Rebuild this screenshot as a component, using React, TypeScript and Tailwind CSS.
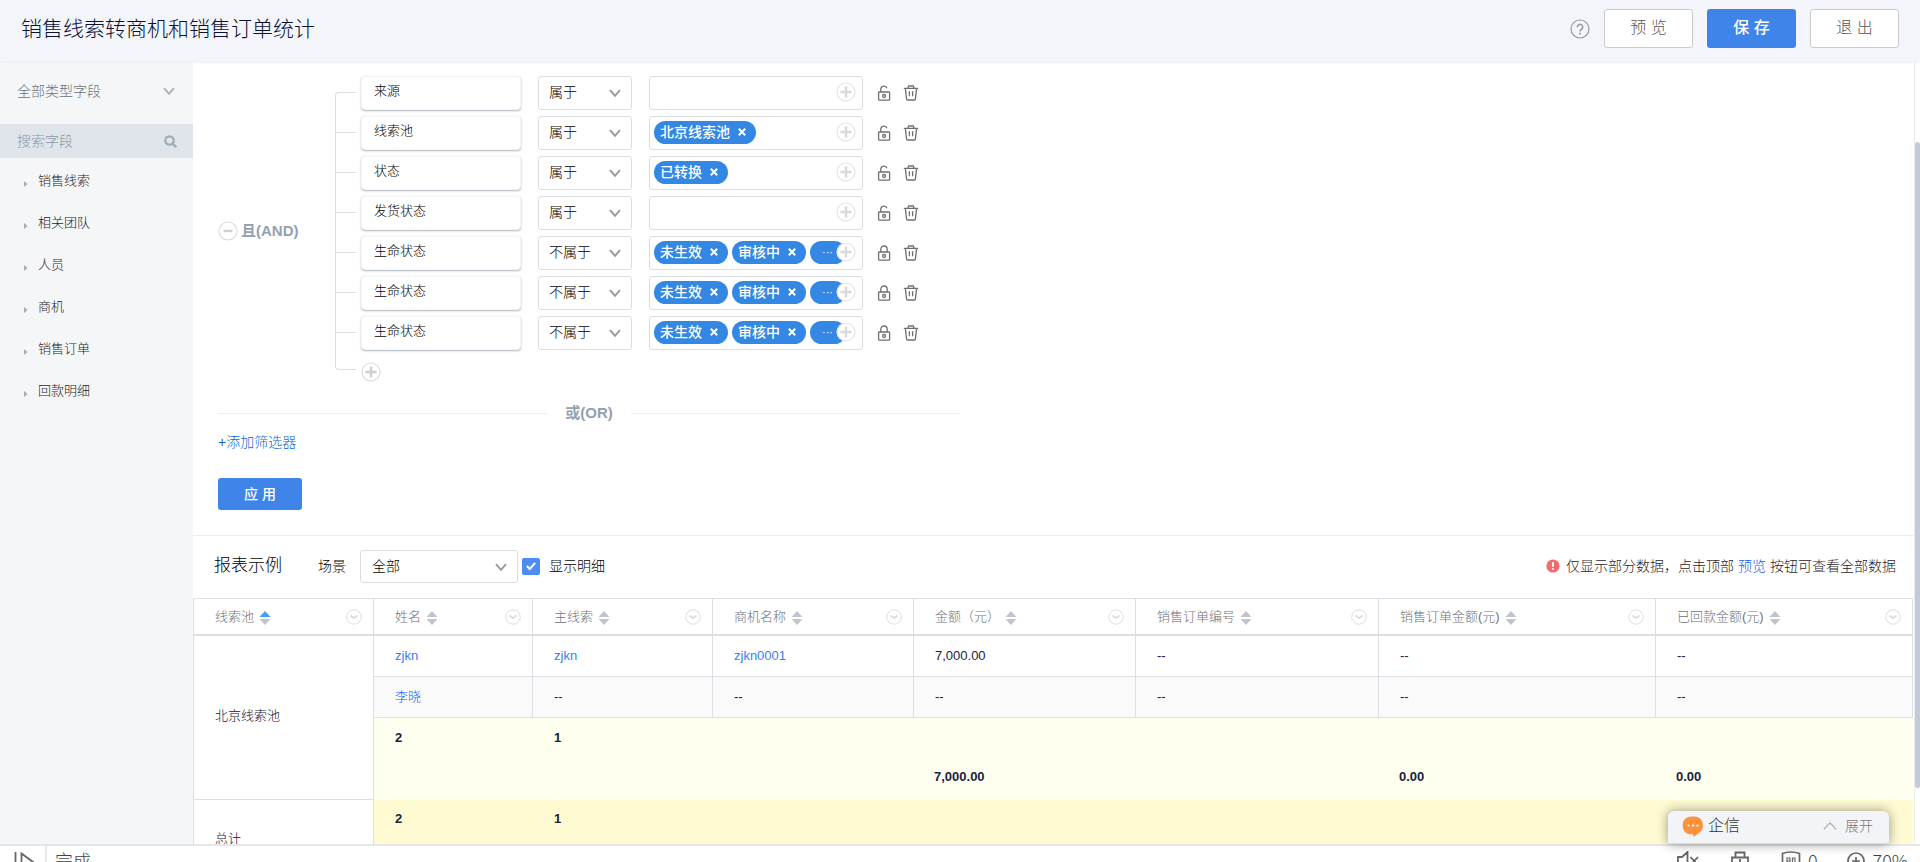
import React from "react";

type FilterRow = {
  field: string;
  operator: string;
  values: string[];
  more?: boolean;
  locked?: boolean;
};

const treeItems = ["销售线索", "相关团队", "人员", "商机", "销售订单", "回款明细"];

const filters: FilterRow[] = [
  { field: "来源", operator: "属于", values: [] },
  { field: "线索池", operator: "属于", values: ["北京线索池"] },
  { field: "状态", operator: "属于", values: ["已转换"] },
  { field: "发货状态", operator: "属于", values: [] },
  { field: "生命状态", operator: "不属于", values: ["未生效", "审核中"], more: true, locked: true },
  { field: "生命状态", operator: "不属于", values: ["未生效", "审核中"], more: true, locked: true },
  { field: "生命状态", operator: "不属于", values: ["未生效", "审核中"], more: true, locked: true },
];

const columns = [
  { title: "线索池", width: "w-[180px]", sorted: true },
  { title: "姓名", width: "w-[159px]" },
  { title: "主线索", width: "w-[180px]" },
  { title: "商机名称", width: "w-[201px]" },
  { title: "金额（元）", width: "w-[222px]" },
  { title: "销售订单编号", width: "w-[243px]" },
  { title: "销售订单金额(元)", width: "w-[277px]" },
  { title: "已回款金额(元)", width: "w-auto" },
];

const Chevron = ({ className = "" }: { className?: string }) => (
  <svg
    viewBox="0 0 12 10"
    className={`w-3 h-2.5 pointer-events-none ${className}`}
    fill="none"
    stroke="currentColor"
    strokeWidth="2"
  >
    <path d="M1 2.200 6 7.800l5-5.600" />
  </svg>
);

const CirclePlus = ({ minus = false, light = false }: { minus?: boolean; light?: boolean }) => (
  <svg viewBox="0 0 20 20" className="w-5 h-5" fill="none">
    <circle cx="10" cy="10" r="9" fill="#fff" stroke={light ? "#e4e4e4" : "#dcdcdc"} strokeWidth="1.200" />
    <path
      d={minus ? "M5.500 10h9" : "M10 4.500v11M4.500 10h11"}
      stroke={light ? "#d9d9d9" : "#d0d0d0"}
      strokeWidth="2.400"
    />
  </svg>
);

const LockIcon = ({ locked }: { locked?: boolean }) => (
  <svg viewBox="0 0 14 16" className="w-3.5 h-4" fill="none" stroke="#707070" strokeWidth="1.300">
    <rect x="1.600" y="7" width="11" height="8.200" rx=".8" />
    <path d={locked ? "M3.800 7V4.200a3.200 3.200 0 0 1 6.400 0V7" : "M3.800 7V4.200a3.200 3.200 0 0 1 6.200-1"} />
    <circle cx="7.100" cy="11" r="1.500" />
  </svg>
);

const TrashIcon = () => (
  <svg viewBox="0 0 16 16" className="w-4 h-4" fill="none" stroke="#707070" strokeWidth="1.300">
    <path d="M.8 3.400h14.400M5 3.200L5.600 1h4.800l.6 2.200M2.400 3.600l1.200 10.600q.1.800.9.800h7q.8 0 .9-.8l1.200-10.600M6.400 6.200v5M9.600 6.200v5" />
  </svg>
);

const SortIcon = ({ active }: { active?: boolean }) => (
  <svg viewBox="0 0 12 14" className="w-3 h-3.5">
    <path d="M6 0l5.500 6H.5z" fill={active ? "#409eff" : "#c0c4cc"} />
    <path d="M6 14l5.500-6H.5z" fill="#c0c4cc" />
  </svg>
);

const MenuIcon = () => (
  <svg viewBox="0 0 16 16" className="w-4 h-4" fill="none">
    <circle cx="8" cy="8" r="7.200" stroke="#dedede" />
    <path d="M4.500 6.500 8 9.200l3.500-2.700" stroke="#dcdcdc" strokeWidth="1.800" />
  </svg>
);

const Pill = ({ label }: { label: string }) => (
  <span className="flex items-center gap-2 h-[23px] pl-1.5 pr-2.5 rounded-full bg-[#3487e2] text-white text-sm font-medium whitespace-nowrap">
    {label}
    <button aria-label={`移除${label}`}>
      <svg viewBox="0 0 8 8" className="w-2 h-2" stroke="#fff" strokeWidth="2">
        <path d="M.8.8l6.400 6.400M7.200.8.8 7.200" />
      </svg>
    </button>
  </span>
);

const Filter = ({ row }: { row: FilterRow }) => (
  <div className="flex items-center h-[34px]">
    <div className="w-40 h-[34px] pl-3 rounded bg-white border border-[#f3f4f5] text-[13px] leading-7 text-black shadow-[0_1px_2px_#aeb6be]">
      {row.field}
    </div>
    <div className="relative ml-[17px]">
      <select
        aria-label={`${row.field}条件`}
        className="appearance-none w-[94px] h-[34px] pl-2.5 pb-0.5 rounded-[3px] border border-[#dcdde0] bg-white text-sm text-black"
      >
        <option>{row.operator}</option>
      </select>
      <Chevron className="absolute right-[11px] top-3 text-[#999]" />
    </div>
    <div className="relative ml-[17px] w-[214px] h-[34px] px-1 pb-0.5 flex items-center gap-1 rounded-[3px] border border-[#dcdde0] bg-white">
      {row.values.map((value) => (
        <Pill key={value} label={value} />
      ))}
      {row.more && (
        <span className="flex items-center h-[23px] w-9 pl-3 rounded-full bg-[#3487e2] text-white text-[11px]">
          ···
        </span>
      )}
      <button aria-label="添加值" className="absolute right-1.5 top-[5px]">
        <CirclePlus light />
      </button>
    </div>
    <button aria-label="锁定" className="ml-3.5">
      <LockIcon locked={row.locked} />
    </button>
    <button aria-label="删除" className="ml-3">
      <TrashIcon />
    </button>
  </div>
);

const Header = () => (
  <header className="relative z-10 flex items-center justify-between h-[61px] shrink-0 px-[21px] pb-1 bg-[#f4f5fa] shadow-[0_1px_3px_#e9ebf0]">
    <h1 className="text-[21px] leading-8 text-[#0a1033]">销售线索转商机和销售订单统计</h1>
    <div className="flex items-center gap-3.5 text-base">
      <a href="#help" aria-label="帮助">
        <svg viewBox="0 0 20 20" className="w-5 h-5" fill="none" stroke="#999">
          <circle cx="10" cy="10" r="9" strokeWidth="1.200" />
          <path d="M7.300 8.200a2.700 2.700 0 1 1 4.400 2c-1 .8-1.700 1.200-1.700 2.400" strokeWidth="1.600" />
          <path d="M10 13.800v1.700" strokeWidth="1.700" />
        </svg>
      </a>
      <button className="w-[89px] h-[39px] pb-0.5 rounded-[3px] border border-[#c9cbcd] bg-white text-[#555]">预 览</button>
      <button className="w-[89px] h-[39px] pb-0.5 rounded-[3px] bg-[#3f85e9] text-white font-medium">保 存</button>
      <button className="w-[89px] h-[39px] pb-0.5 rounded-[3px] border border-[#c9cbcd] bg-white text-[#555]">退 出</button>
    </div>
  </header>
);

const Sidebar = () => (
  <aside className="w-[193px] shrink-0 bg-[#f5f6f8]">
    <div className="relative">
      <select
        aria-label="字段类型"
        className="appearance-none block w-full h-[63px] pl-[17px] pb-1 text-sm text-[#6c727c] bg-transparent"
      >
        <option>全部类型字段</option>
      </select>
      <Chevron className="absolute right-[18px] top-[25px] text-[#a9b3be]" />
    </div>
    <div className="flex items-center h-[34px] pl-[17px] pr-4 bg-[#e0e5ec]">
      <input
        aria-label="搜索字段"
        placeholder="搜索字段"
        className="flex-1 min-w-0 bg-transparent text-sm placeholder:text-[#8b98a7] outline-none"
      />
      <svg viewBox="0 0 13 13" className="w-[13px] h-[13px]" fill="none" stroke="#9fabb8" strokeWidth="2.200">
        <circle cx="5.500" cy="5.500" r="4.200" />
        <path d="M8.600 8.600 12.300 12.300" />
      </svg>
    </div>
    <ul className="pt-0.5 text-[13px] text-[#1f242d]">
      {treeItems.map((item) => (
        <li key={item} className="flex items-center h-[42px] pl-6 gap-2.5">
          <svg viewBox="0 0 4 6" className="w-1 h-1.5 mt-1.5" fill="#a3afbb">
            <path d="M0 0l3.600 3-3.600 3z" />
          </svg>
          {item}
        </li>
      ))}
    </ul>
  </aside>
);

const FilterPanel = () => (
  <section className="px-[25px] pt-[15px] pb-[25px] border-b border-[#ececee]">
    {/* Condition group */}
    <div className="flex">
      <div className="flex items-center gap-[3px] w-[117px] pt-1 text-[15px] font-bold text-[#93a0af]">
        <button aria-label="折叠条件组">
          <CirclePlus minus />
        </button>
        且(AND)
      </div>
      <div className="w-[21px] mt-4 mr-[5px]">
        {filters.map((_, i) => (
          <div
            key={i}
            className="h-10 border-l border-t border-[#dcdde0] first:rounded-tl last:h-[38px] last:rounded-bl last:border-b"
          />
        ))}
      </div>
      <div>
        <div className="flex flex-col gap-1.5">
          {filters.map((row, i) => (
            <Filter key={i} row={row} />
          ))}
        </div>
        <button aria-label="添加条件" className="block mt-3">
          <CirclePlus />
        </button>
      </div>
    </div>

    {/* Group separator */}
    <div className="flex items-center max-w-[742px] mt-5 text-[15px] leading-[22px] font-bold text-[#93a0af]">
      <span className="flex-1 h-px bg-[#ebecee]" />
      <span className="px-[18px]">或(OR)</span>
      <span className="flex-1 h-px bg-[#ebecee]" />
    </div>

    <a href="#add" className="block mt-2 text-sm leading-5 text-[#0c68d0]">
      +添加筛选器
    </a>
    <button className="block mt-[26px] w-[84px] h-8 rounded-[3px] bg-[#3f85e9] text-white text-sm font-medium">
      应 用
    </button>
  </section>
);

const ReportBar = () => (
  <div className="flex items-center h-[62px] pb-0.5 pl-[21px] pr-[18px] text-sm text-black">
    <h2 className="text-[17px]">报表示例</h2>
    <label htmlFor="scene" className="ml-9">
      场景
    </label>
    <div className="relative ml-3.5">
      <select
        id="scene"
        className="appearance-none block w-[158px] h-[33px] pl-[11px] rounded-[3px] border border-[#dcdde0] bg-white text-sm"
      >
        <option>全部</option>
      </select>
      <Chevron className="absolute right-[11px] top-3 text-[#999]" />
    </div>
    <label className="relative flex items-center ml-1">
      <input type="checkbox" defaultChecked className="appearance-none w-[18px] h-[17px] mr-[9px] rounded-[2px] bg-[#4d8cf2]" />
      <svg viewBox="0 0 10 10" className="absolute left-1 w-2.5 h-2.5 pointer-events-none" fill="none" stroke="#fff" strokeWidth="2">
        <path d="M.8 5l3 3 5.400-6.200" />
      </svg>
      显示明细
    </label>
    <p className="flex items-center ml-auto text-[#1f242d]">
      <svg viewBox="0 0 14 14" className="w-3.5 h-3.5 mr-1.5">
        <circle cx="7" cy="7" r="6.600" fill="#f56c6c" />
        <path d="M7 3v4.800M7 9.200v1.700" stroke="#fff" strokeWidth="1.800" />
      </svg>
      仅显示部分数据，点击顶部
      <a href="#preview" className="mx-1 text-[#1260f5]">
        预览
      </a>
      按钮可查看全部数据
    </p>
  </div>
);

const cell = "border-r border-b border-[#dcdfe6] pl-[21px]";

const ReportTable = () => (
  <div className="pr-px">
    <table className="w-full table-fixed border-separate border-spacing-0 border-l border-t border-[#dcdfe6] text-[13px] text-[#1b2142]">
      <thead>
        <tr>
          {columns.map((col) => (
            <th
              key={col.title}
              className={`${col.width} h-[37px] border-r border-b-2 border-[#dcdfe6] pl-[21px] pr-[11px] font-light text-[#6e7177]`}
            >
              <div className="flex items-center whitespace-nowrap">
                {col.title}
                <button aria-label={`${col.title}排序`} className="ml-[5px] mt-0.5">
                  <SortIcon active={col.sorted} />
                </button>
                <button aria-label={`${col.title}菜单`} className="ml-auto">
                  <MenuIcon />
                </button>
              </div>
            </th>
          ))}
        </tr>
      </thead>
      <tbody>
        <tr>
          <td rowSpan={3} className={`${cell} pb-1 text-[#0a1033]`}>
            北京线索池
          </td>
          <td className={`${cell} h-[41px] text-[#3a7cfa]`}>
            <a href="#zjkn">zjkn</a>
          </td>
          <td className={`${cell} text-[#3a7cfa]`}>
            <a href="#lead">zjkn</a>
          </td>
          <td className={`${cell} text-[#3a7cfa]`}>
            <a href="#opportunity">zjkn0001</a>
          </td>
          <td className={cell}>7,000.00</td>
          <td className={cell}>--</td>
          <td className={cell}>--</td>
          <td className={cell}>--</td>
        </tr>
        <tr className="bg-[#fafafa]">
          <td className={`${cell} h-[41px] text-[#1260f5]`}>
            <a href="#lixiao">李晓</a>
          </td>
          <td className={cell}>--</td>
          <td className={cell}>--</td>
          <td className={cell}>--</td>
          <td className={cell}>--</td>
          <td className={cell}>--</td>
          <td className={cell}>--</td>
        </tr>
        <tr className="bg-[#fffff0] font-bold leading-[39px]">
          <td className="h-[82px] pl-[21px] align-top">2</td>
          <td className="pl-[21px] align-top">1</td>
          <td />
          <td className="pl-5 pb-1 align-bottom">7,000.00</td>
          <td />
          <td className="pl-5 pb-1 align-bottom">0.00</td>
          <td className="pl-5 pb-1 align-bottom">0.00</td>
        </tr>
        <tr className="bg-[#fefad1] font-bold leading-[37px]">
          <td className={`${cell} pb-1 bg-white font-light text-[#0a1033]`}>总计</td>
          <td className="h-[82px] pl-[21px] align-top">2</td>
          <td className="pl-[21px] align-top">1</td>
          <td />
          <td />
          <td />
          <td />
          <td />
        </tr>
      </tbody>
    </table>
  </div>
);

const ChatDock = () => (
  <button className="absolute right-[31px] bottom-0 flex items-center w-[221px] h-[33px] pl-3.5 pr-4 pb-0.5 rounded-t-md border-b border-[#d9dadd] bg-[#f3f4f7] shadow-[0_0_12px_rgba(0,0,0,0.4)] text-base text-[#333]">
    <svg viewBox="0 0 22 21" className="w-[22px] h-[21px] mr-1">
      <path d="M11 .5h1.500c5 0 8.500 3.500 8.500 8.700 0 4.300-2.500 6.800-4.700 8.200-1.500 1-2.300 2.200-4.300 3-.6.200-.9 0-.8-.6l.2-1.600H9.500C4 18.200.7 14.700.7 9.400.7 4 4.200.5 9.500.5z" fill="#fd923c" />
      <circle cx="6.600" cy="9.500" r="1.100" fill="#fff" />
      <circle cx="11" cy="9.500" r="1.100" fill="#fff" />
      <circle cx="15.400" cy="9.500" r="1.100" fill="#fff" />
    </svg>
    企信
    <svg viewBox="0 0 14 8" className="w-3.5 h-2 ml-auto mr-2" fill="none" stroke="#aaa" strokeWidth="1.200">
      <path d="M.8 7.300 7 .9l6.200 6.400" />
    </svg>
    <span className="text-sm text-[#777]">展开</span>
  </button>
);

const StatusBar = () => (
  <footer className="h-[18px] shrink-0 overflow-hidden border-t-2 border-[#e6e7e8] bg-white font-['Noto_Sans_CJK_SC',sans-serif] text-lg leading-7 text-[#444]">
    <div className="flex items-start h-8">
      <button aria-label="侧边栏" className="flex justify-end w-[45px] pt-[6px] pr-[11px] h-8">
        <svg viewBox="0 0 20 20" className="w-5 h-5" fill="none" stroke="#666" strokeWidth="1.800">
          <path d="M1.500 0v20M7.500 1.500v17L19 10z" />
        </svg>
      </button>
      <span className="w-0.5 h-8 bg-[#e6e7e8]" />
      <span className="ml-2">完成</span>
      <div className="flex items-start ml-auto pr-3">
        <svg viewBox="0 0 22 20" className="w-[22px] h-5 mt-[5px]" fill="none" stroke="#666" strokeWidth="1.800">
          <path d="M1 18V6h4L10.500 1v18M13.500 6l7.500 8M21 6l-7.500 8" />
        </svg>
        <svg viewBox="0 0 18 20" className="w-[18px] h-5 ml-8 mt-[5px]" fill="none" stroke="#666" strokeWidth="1.800">
          <path d="M4.500 6V1.500h9V6M1 16V6.500h16V16M9 8v4" />
        </svg>
        <svg viewBox="0 0 20 20" className="w-5 h-5 ml-8 mt-[5px]" fill="none" stroke="#666" strokeWidth="1.700">
          <path d="M1.500 2.500Q10-.5 18.500 2.500V12q-1 4-8.500 7Q2.500 16 1.500 12z" />
          <path d="M6 12V7h3v5M6 10h3M11.500 7v5h2.500V7z" strokeWidth="1.200" />
        </svg>
        <span className="ml-[7px]">0</span>
        <svg viewBox="0 0 18 18" className="w-[18px] h-[18px] ml-[29px] mt-[6px]" fill="none" stroke="#666" strokeWidth="1.700">
          <circle cx="9" cy="9" r="8" />
          <path d="M9 5v8M5 9h8" />
        </svg>
        <span className="ml-2">70%</span>
      </div>
    </div>
  </footer>
);

export default function App() {
  return (
    <div className="flex flex-col h-screen overflow-hidden bg-white font-['Liberation_Sans','Noto_Sans_CJK_SC',sans-serif] font-light">
      <Header />
      <div className="relative flex flex-1 min-h-0">
        <Sidebar />
        <main className="flex-1 min-w-0 overflow-hidden">
          <FilterPanel />
          <ReportBar />
          <ReportTable />
        </main>
        {/* Scroll track */}
        <div className="w-1.5 shrink-0 pt-[81px] border-l border-[#ebecf0]">
          <div className="h-[92%] rounded-full bg-[#c3cbd8]" />
        </div>
        <ChatDock />
      </div>
      <StatusBar />
    </div>
  );
}
